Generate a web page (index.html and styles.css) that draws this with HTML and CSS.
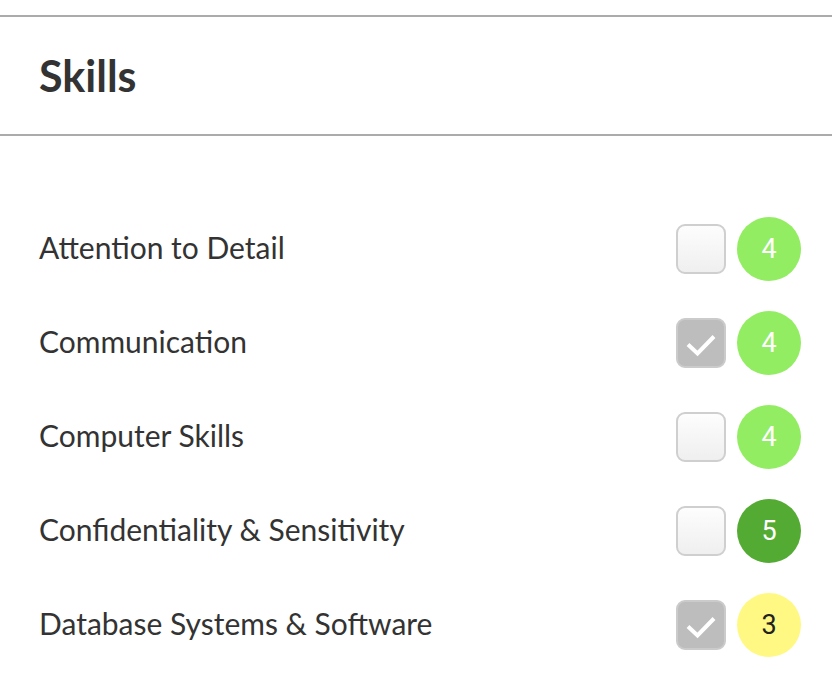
FILE: index.html
```html
<!DOCTYPE html>
<html>
<head>
<meta charset="utf-8">
<link rel="stylesheet" href="styles.css">
</head>
<body>
<div class="panel">
  <div class="header"><h1 class="title">Skills</h1></div>
  <div class="list">
    <div class="row">
      <span class="name">Attention to Detail</span>
      <div class="controls"><span class="check"></span><span class="score s4">4</span></div>
    </div>
    <div class="row">
      <span class="name">Communication</span>
      <div class="controls"><span class="check checked"><svg width="46" height="46" viewBox="0 0 46 46"><path d="M10 24.5 L19.5 33.5 L36 16.5" fill="none" stroke="#fff" stroke-width="4"/></svg></span><span class="score s4">4</span></div>
    </div>
    <div class="row">
      <span class="name">Computer Skills</span>
      <div class="controls"><span class="check"></span><span class="score s4">4</span></div>
    </div>
    <div class="row">
      <span class="name">Confidentiality &amp; Sensitivity</span>
      <div class="controls"><span class="check"></span><span class="score s5">5</span></div>
    </div>
    <div class="row">
      <span class="name">Database Systems &amp; Software</span>
      <div class="controls"><span class="check checked"><svg width="46" height="46" viewBox="0 0 46 46"><path d="M10 24.5 L19.5 33.5 L36 16.5" fill="none" stroke="#fff" stroke-width="4"/></svg></span><span class="score s3">3</span></div>
    </div>
  </div>
</div>
</body>
</html>
```
FILE: styles.css
```css
html, body {
  margin: 0;
  padding: 0;
  background: #fff;
}
.panel {
  margin-top: 15px;
  font-family: Lato, "Open Sans", sans-serif;
  color: #333;
}
.header {
  border-top: 2px solid #ababab;
  border-bottom: 2px solid #ababab;
  height: 117px;
  display: flex;
  align-items: center;
  padding-left: 39px;
}
.title {
  margin: 0;
  font-size: 43px;
  font-weight: 700;
  color: #333;
}
.list {
  padding: 81px 31px 0 39px;
  display: flex;
  flex-direction: column;
  gap: 30px;
}
.row {
  display: flex;
  align-items: center;
  justify-content: space-between;
  height: 64px;
}
.name {
  font-size: 30px;
  color: #333;
  margin-bottom: 4px;
}
.controls {
  display: flex;
  align-items: center;
  gap: 11px;
}
.check {
  box-sizing: border-box;
  width: 50px;
  height: 50px;
  border: 2px solid #cfcfcf;
  border-radius: 9px;
  background: linear-gradient(#fdfdfd, #efefef);
  display: flex;
  align-items: center;
  justify-content: center;
}
.check svg {
  display: block;
}
.check.checked {
  background: #bdbdbd;
  border-color: #cbcbcb;
}
.score {
  width: 64px;
  height: 64px;
  border-radius: 50%;
  display: flex;
  align-items: center;
  justify-content: center;
  font-family: Roboto, "Liberation Sans", sans-serif;
  font-size: 27px;
  color: #fff;
}
.s4 { background: #93ed62; }
.s5 { background: #54ab33; }
.s3 { background: #fff983; color: #222; }
```
